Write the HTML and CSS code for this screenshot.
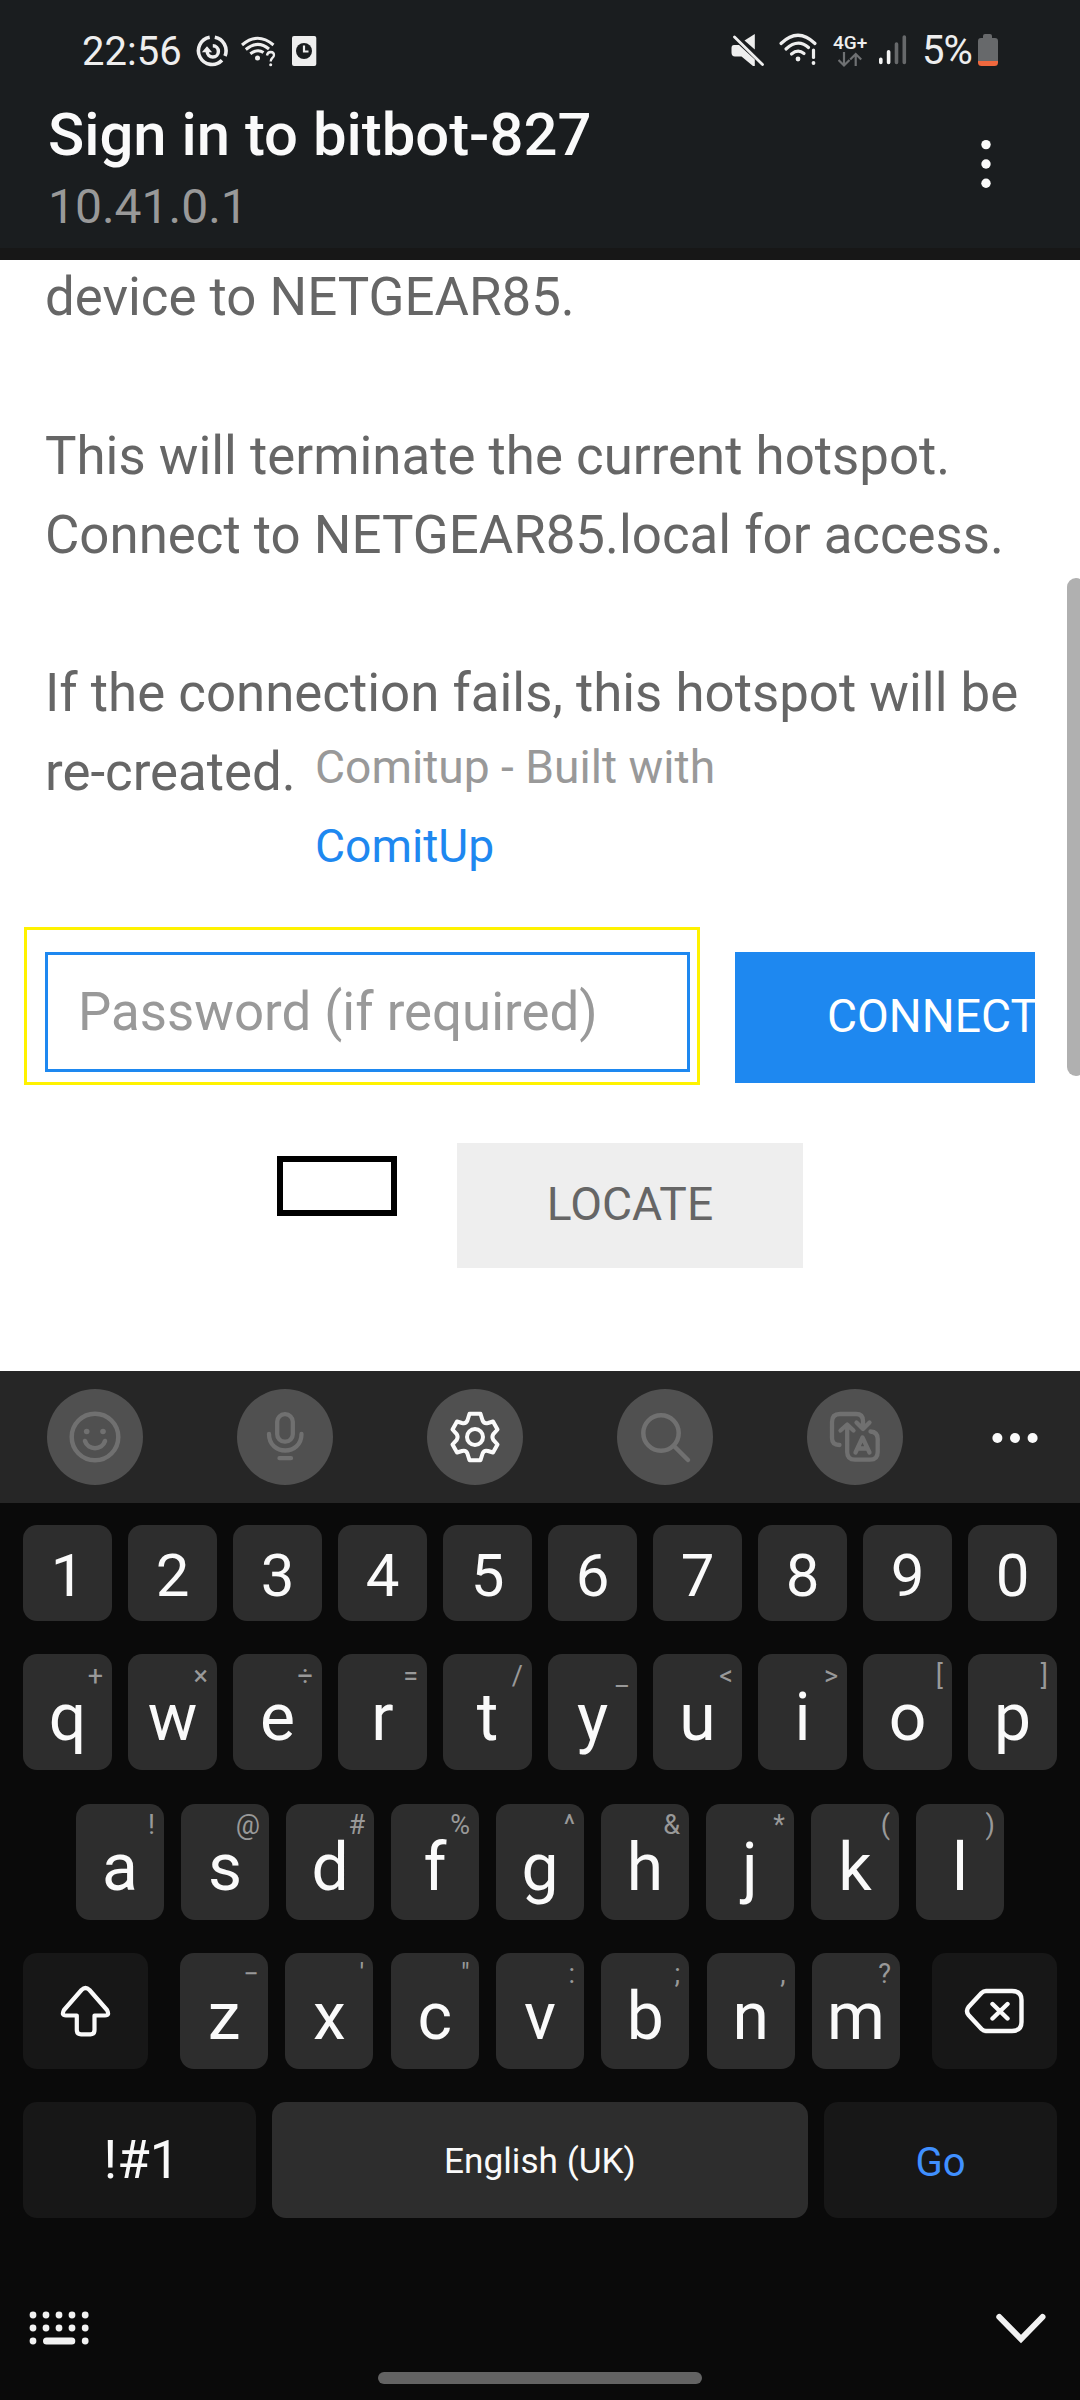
FILE: index.html
```html
<!DOCTYPE html>
<html lang="en">
<head>
<meta charset="utf-8">
<title>Sign in to bitbot-827</title>
<link rel="stylesheet" href="styles.css">
</head>
<body>
<header class="header">
  <div class="status">
    <span class="time">22:56</span>
    <svg class="ico" width="32" height="34" viewBox="196 34 32 34" fill="none" stroke="#eee" stroke-width="3.6">
      <path d="M209.700 37.300A13.700 13.700 0 1 0 222 60.300M214.800 37.300A13.700 13.700 0 0 1 225 56"/>
      <path d="M212.800 45.800A5.600 5.600 0 1 1 207.200 51.500" stroke-width="3.500"/>
      <path d="M203.500 51.500L207 47.500L210.500 51.500Z" fill="#eee" stroke-width="1.500"/>
    </svg>
    <svg class="ico wifi-q" width="36" height="34" viewBox="240 34 36 34" fill="none" stroke="#eee" stroke-width="3">
      <path d="M242 45Q257.500 31.500 273.500 45M245.800 49.500Q257.500 39.500 269 49M250.300 53.800Q257.500 48.300 263.500 52.500"/>
      <circle cx="257.500" cy="58" r="2.500" fill="#eee" stroke="none"/>
      <path d="M267 55.500Q267.500 52 270.700 52Q274 52.200 274 55Q274 56.800 272.300 58Q270.700 59.300 270.700 61.500" stroke-width="2.300"/>
      <circle cx="270.700" cy="64.700" r="1.500" fill="#eee" stroke="none"/>
    </svg>
    <svg class="ico doc" width="26" height="34" viewBox="291 34 26 34">
      <rect x="292" y="36" width="24.300" height="30" rx="2" fill="#eee"/>
      <circle cx="304" cy="51" r="8" fill="#1a1d1f"/>
      <path d="M304 45.500V51.500H308.500" fill="none" stroke="#eee" stroke-width="2.200"/>
    </svg>
    <span class="spacer"></span>
    <svg class="ico" width="34" height="36" viewBox="731 34 34 36">
      <path d="M744.500 40.500L754.800 34V49.500Z" fill="#eee"/>
      <path d="M734.500 37L762.500 64.500" stroke="#1a1d1f" stroke-width="6"/>
      <path d="M734.500 37L762.500 64.500" stroke="#eee" stroke-width="2.800" stroke-linecap="round"/>
      <path d="M734 45H739L754.800 59.500V66H753L741.500 56.500H735Q731.500 56.500 731.500 52.500V48Q731.500 45 734 45Z" fill="#eee"/>
    </svg>
    <svg class="ico wifi-a" width="40" height="36" viewBox="778 34 40 36" overflow="visible" fill="none" stroke="#eee" stroke-width="3.200" stroke-linecap="round">
      <path d="M781 43.500Q798 27 815 43.500M786 49Q798 38 808.500 47.500M791.500 54Q798 48.500 804 53.500"/>
      <path d="M813.500 50V57.500"/>
      <circle cx="798" cy="59" r="2.400" fill="#eee" stroke="none"/>
      <circle cx="813.500" cy="63" r="1.900" fill="#eee" stroke="none"/>
    </svg>
    <span class="net"><b>4G+</b>
      <svg width="26" height="17" viewBox="838 51 26 17" fill="none" stroke="#6f7173" stroke-width="2.200"><path d="M844 52V65.500M838.500 60L844 65.500L849.500 60M855.700 66V54M850.200 59.500L855.700 54L861.200 59.500"/></svg>
    </span>
    <svg class="ico" width="30" height="32" viewBox="878 34 30 32" stroke-width="3.600" stroke-linecap="round">
      <path d="M880.800 59.300V62.400M888.600 51.800V62.400" stroke="#f4f4f4"/>
      <path d="M896.500 44V62.400M904.300 37V62.400" stroke="#67696b"/>
    </svg>
    <span class="pct">5%</span>
    <svg class="ico" width="20" height="32" viewBox="978 34 20 32">
      <path d="M983 38V36Q983 34 985 34H990Q992 34 992 36V38H995Q998 38 998 41V61H978V41Q978 38 981 38Z" fill="#67696b"/>
      <path d="M978 61H998V62.500Q998 66 994.500 66H981.500Q978 66 978 62.500Z" fill="#f0683e"/>
    </svg>
  </div>
  <div class="bar">
    <div>
      <h1 class="title">Sign in to bitbot-827</h1>
      <div class="subtitle">10.41.0.1</div>
    </div>
    <svg class="more" width="12" height="50" viewBox="0 0 12 50" fill="#fafafa"><circle cx="6" cy="5.600" r="4.700"/><circle cx="6" cy="25" r="4.700"/><circle cx="6" cy="44.200" r="4.700"/></svg>
  </div>
</header>

<main class="page">
  <p class="msg">device to NETGEAR85.<br><br>This will terminate the current hotspot.<br>Connect to NETGEAR85.local for access.<br><br>If the connection fails, this hotspot will be<br>re-created.</p>
  <div class="credit">Comitup - Built with<br><a class="link">ComitUp</a></div>
  <div class="form">
    <div class="focus"><div class="field">Password (if required)</div></div>
    <div class="connect">CONNECT</div>
  </div>
  <div class="actions">
    <div class="box"></div>
    <div class="locate">LOCATE</div>
  </div>
  <div class="scroll"></div>
</main>

<section class="keyboard">
  <div class="tools">
    <div class="tool"><svg width="96" height="96" viewBox="47 1389 96 96" fill="none" stroke="#707070" stroke-width="4.500" stroke-linecap="round"><circle cx="95" cy="1437" r="23.300"/><circle cx="86.700" cy="1431.500" r="2.800" fill="#707070" stroke="none"/><circle cx="103" cy="1431.500" r="2.800" fill="#707070" stroke="none"/><path d="M85 1441C88 1450.500 102 1450.500 105 1441"/></svg></div>
    <div class="tool"><svg width="96" height="96" viewBox="237 1389 96 96" fill="none" stroke="#707070" stroke-width="4.300" stroke-linecap="round"><rect x="277.200" y="1414.200" width="15.600" height="27.500" rx="7.500"/><path d="M269 1434C269 1456 301.500 1456 301.500 1434M279.500 1458.200H291"/></svg></div>
    <div class="tool"><svg width="96" height="96" viewBox="427 1389 96 96" fill="none" stroke="#fafafa" stroke-width="4" stroke-linejoin="round"><circle cx="475" cy="1437" r="8"/><path d="M469.500 1413.800H480.500L482.600 1420.500Q484 1424 488 1423L493 1421.500L497.500 1429.500L493.300 1434.200Q491.500 1437 493.300 1439.800L497.500 1444.500L493 1452.500L488 1451Q484 1450 482.600 1453.500L480.500 1460.200H469.500L467.400 1453.500Q466 1450 462 1451L457 1452.500L452.500 1444.500L456.700 1439.800Q458.500 1437 456.700 1434.200L452.500 1429.500L457 1421.500L462 1423Q466 1424 467.400 1420.500Z"/></svg></div>
    <div class="tool"><svg width="96" height="96" viewBox="617 1389 96 96" fill="none" stroke="#707070" stroke-width="4.500" stroke-linecap="round"><circle cx="661" cy="1433" r="17.700"/><path d="M674.500 1446.500L688 1460"/></svg></div>
    <div class="tool"><svg width="96" height="96" viewBox="807 1389 96 96" fill="none" stroke="#707070" stroke-width="4.300" stroke-linecap="round" stroke-linejoin="round"><path d="M839.500 1445Q832 1445 832 1438V1422Q832 1414 840 1414H856Q863 1414 863 1421V1429M856.500 1422.500L863 1429L869.500 1422.500M840.500 1430.500L847.200 1424.500L853.500 1430.500M847.200 1425V1452Q847.200 1459.700 855 1459.700H870Q877.700 1459.700 877.700 1452V1439Q877.700 1432 870.500 1431.500M855.500 1452.500L862.500 1437.500L869.500 1452.500M858.500 1448.500H866.500"/></svg></div>
    <svg class="dots" width="48" height="12" viewBox="0 0 48 12" fill="#fafafa"><circle cx="6.400" cy="6" r="5"/><circle cx="24" cy="6" r="5"/><circle cx="41.600" cy="6" r="5"/></svg>
  </div>
  <div class="keys">
    <div class="row nums"><div class="key">1</div><div class="key">2</div><div class="key">3</div><div class="key">4</div><div class="key">5</div><div class="key">6</div><div class="key">7</div><div class="key">8</div><div class="key">9</div><div class="key">0</div></div>
    <div class="row"><div class="key">q<i>+</i></div><div class="key">w<i>×</i></div><div class="key">e<i>÷</i></div><div class="key">r<i>=</i></div><div class="key">t<i>/</i></div><div class="key">y<i>_</i></div><div class="key">u<i>&lt;</i></div><div class="key">i<i>&gt;</i></div><div class="key">o<i>[</i></div><div class="key">p<i>]</i></div></div>
    <div class="row home"><div class="key">a<i>!</i></div><div class="key">s<i>@</i></div><div class="key">d<i>#</i></div><div class="key">f<i>%</i></div><div class="key">g<i>^</i></div><div class="key">h<i>&amp;</i></div><div class="key">j<i>*</i></div><div class="key">k<i>(</i></div><div class="key">l<i>)</i></div></div>
    <div class="row lower">
      <div class="key fn"><svg width="125" height="116" viewBox="23 1953 125 116" fill="none" stroke="#fafafa" stroke-width="4.200" stroke-linejoin="round"><path d="M81.500 1990Q85.500 1986 89.500 1990L107 2010Q110 2015.500 105 2015.500H94.500V2030Q94.500 2034.300 90.500 2034.300H81Q76.800 2034.300 76.800 2030V2015.500H66Q61 2015.500 64 2010Z"/></svg></div>
      <div class="letters"><div class="key">z<i>−</i></div><div class="key">x<i>'</i></div><div class="key">c<i>"</i></div><div class="key">v<i>:</i></div><div class="key">b<i>;</i></div><div class="key">n<i>,</i></div><div class="key">m<i>?</i></div></div>
      <div class="key fn"><svg width="125" height="116" viewBox="932 1953 125 116" fill="none" stroke="#fafafa" stroke-width="4.400" stroke-linecap="round" stroke-linejoin="round"><path d="M986 1991H1012Q1021.500 1991 1021.500 2000V2022Q1021.500 2031 1012 2031H986Q983.500 2031 981.500 2029L968.500 2015Q965.500 2011 968.500 2007L981.500 1993Q983.500 1991 986 1991ZM992.500 2004L1007.500 2018.500M1007.500 2004L992.500 2018.500"/></svg></div>
    </div>
    <div class="row bottom"><div class="key fn sym">!#1</div><div class="key space">English (UK)</div><div class="key fn go">Go</div></div>
  </div>
  <div class="nav">
    <svg width="62" height="36" viewBox="28 2310 62 36" fill="#f2f2f2"><g id="r"><circle cx="33" cy="2315" r="3.400"/><circle cx="46" cy="2315" r="3.400"/><circle cx="59" cy="2315" r="3.400"/><circle cx="72" cy="2315" r="3.400"/><circle cx="85.200" cy="2315" r="3.400"/></g><use href="#r" y="13"/><circle cx="33" cy="2341" r="3.400"/><rect x="43" y="2337.600" width="32.300" height="7" rx="3.500"/><circle cx="85.200" cy="2341" r="3.400"/></svg>
    <svg width="54" height="36" viewBox="994 2310 54 36" fill="none" stroke="#f2f2f2" stroke-width="6" stroke-linecap="round"><path d="M999.300 2317L1021 2339L1042.500 2317"/></svg>
  </div>
  <div class="pill"></div>
</section>
</body>
</html>
```
FILE: styles.css
```css
* { box-sizing: border-box; }
body { margin: 0; width: 1080px; height: 2400px; overflow: hidden; font-family: Roboto, "Noto Sans", sans-serif; background: #0a0a0a; }
svg { display: block; flex: none; }

.header { height: 260px; background: #1a1d1f; border-bottom: 12px solid #171717; color: #fafafa; }
.status { display: flex; height: 94px; padding: 34px 82px 0 82px; color: #eee; font-size: 40px; line-height: 36px; }
.time { width: 114px; }
.wifi-q { margin-left: 12px; }
.doc { margin-left: 15px; }
.spacer { flex: 1; }
.wifi-a { margin-left: 13px; }
.net { width: 34px; margin: -2px 11px 0 15px; }
.net b { display: block; font-size: 19px; font-weight: 500; line-height: 22px; height: 19px; }
.net svg { margin-left: 5px; }
.pct { width: 56px; margin: -1px 0 0 14px; letter-spacing: -1px; }

.bar { display: flex; justify-content: space-between; padding: 1px 88px 0 48px; }
.title { margin: 0; font-size: 59.8px; line-height: 80px; font-weight: 500; }
.subtitle { font-size: 48px; line-height: 64px; color: #999; }
.more { margin-top: 44px; }

.page { position: relative; height: 1111px; overflow: hidden; padding: 0 45px 0 24px; background: #fff; color: #666; }
.msg { margin: -1.6px 0 0 21px; height: 668.6px; font-size: 52.8px; line-height: 79.17px; white-space: nowrap; }
.credit { position: absolute; left: 315px; top: 468px; font-size: 46.2px; line-height: 79px; color: #999; }
.link { color: #1e88f0; }
.form { display: flex; height: 216px; }
.focus { width: 676px; height: 158px; padding: 22px 7px 10px 18px; border: 3px solid #fff200; }
.field { height: 120px; border: 3px solid #1e88f0; padding-left: 30px; font-size: 52.8px; line-height: 114px; color: #999; }
.connect { width: 300px; height: 131px; margin: 25px 0 0 35px; padding-left: 92px; overflow: hidden; background: #1e88f0; color: #fff; font-size: 46.2px; line-height: 128px; }
.actions { display: flex; padding-left: 253px; }
.box { width: 120px; height: 60px; margin: 13px 60px 0 0; border: 6px solid #000; }
.locate { width: 346px; height: 125px; background: #eee; text-align: center; font-size: 46.2px; line-height: 122px; }
.scroll { position: absolute; left: 1067px; top: 318px; width: 18px; height: 498px; border-radius: 9px; background: #b0b0b0; }

.tools { display: flex; align-items: center; height: 132px; padding: 0 41px 0 47px; gap: 94px; background: #262626; }
.tool { width: 96px; height: 96px; border-radius: 50%; background: #505050; flex: none; }
.dots { margin: 2px 0 0 -6px; }
.keys { display: flex; flex-direction: column; gap: 33px; padding: 22px 23px 0; }
.row { display: flex; justify-content: space-between; height: 116px; }
.key { position: relative; width: 89px; height: 100%; border-radius: 14px; background: #2d2d2d; color: #fafafa; text-align: center; font-size: 66px; line-height: 127px; }
.key i { position: absolute; top: 0; right: 9px; font-style: normal; font-size: 27px; line-height: 44px; color: #999; }
.nums { height: 96px; }
.nums .key { font-size: 60px; line-height: 101px; }
.home { margin-top: 1px; padding: 0 53px; }
.home .key, .letters .key { width: 88px; }
.home i, .lower i { line-height: 42px; }
.letters { display: flex; justify-content: space-between; width: 720px; }
.row .fn { background: #171717; }
.lower .fn { width: 125px; }
.bottom .key { width: 233px; }
.bottom .sym { font-size: 52.8px; line-height: 117px; padding-left: 4px; }
.bottom .space { width: 536px; font-size: 35.2px; line-height: 118px; }
.bottom .go { font-size: 40px; line-height: 121px; color: #4090ff; }
.nav { display: flex; justify-content: space-between; padding: 92px 32px 0 28px; }
.pill { width: 324px; height: 12px; margin: 26px auto 0; border-radius: 6px; background: #636363; }
```
